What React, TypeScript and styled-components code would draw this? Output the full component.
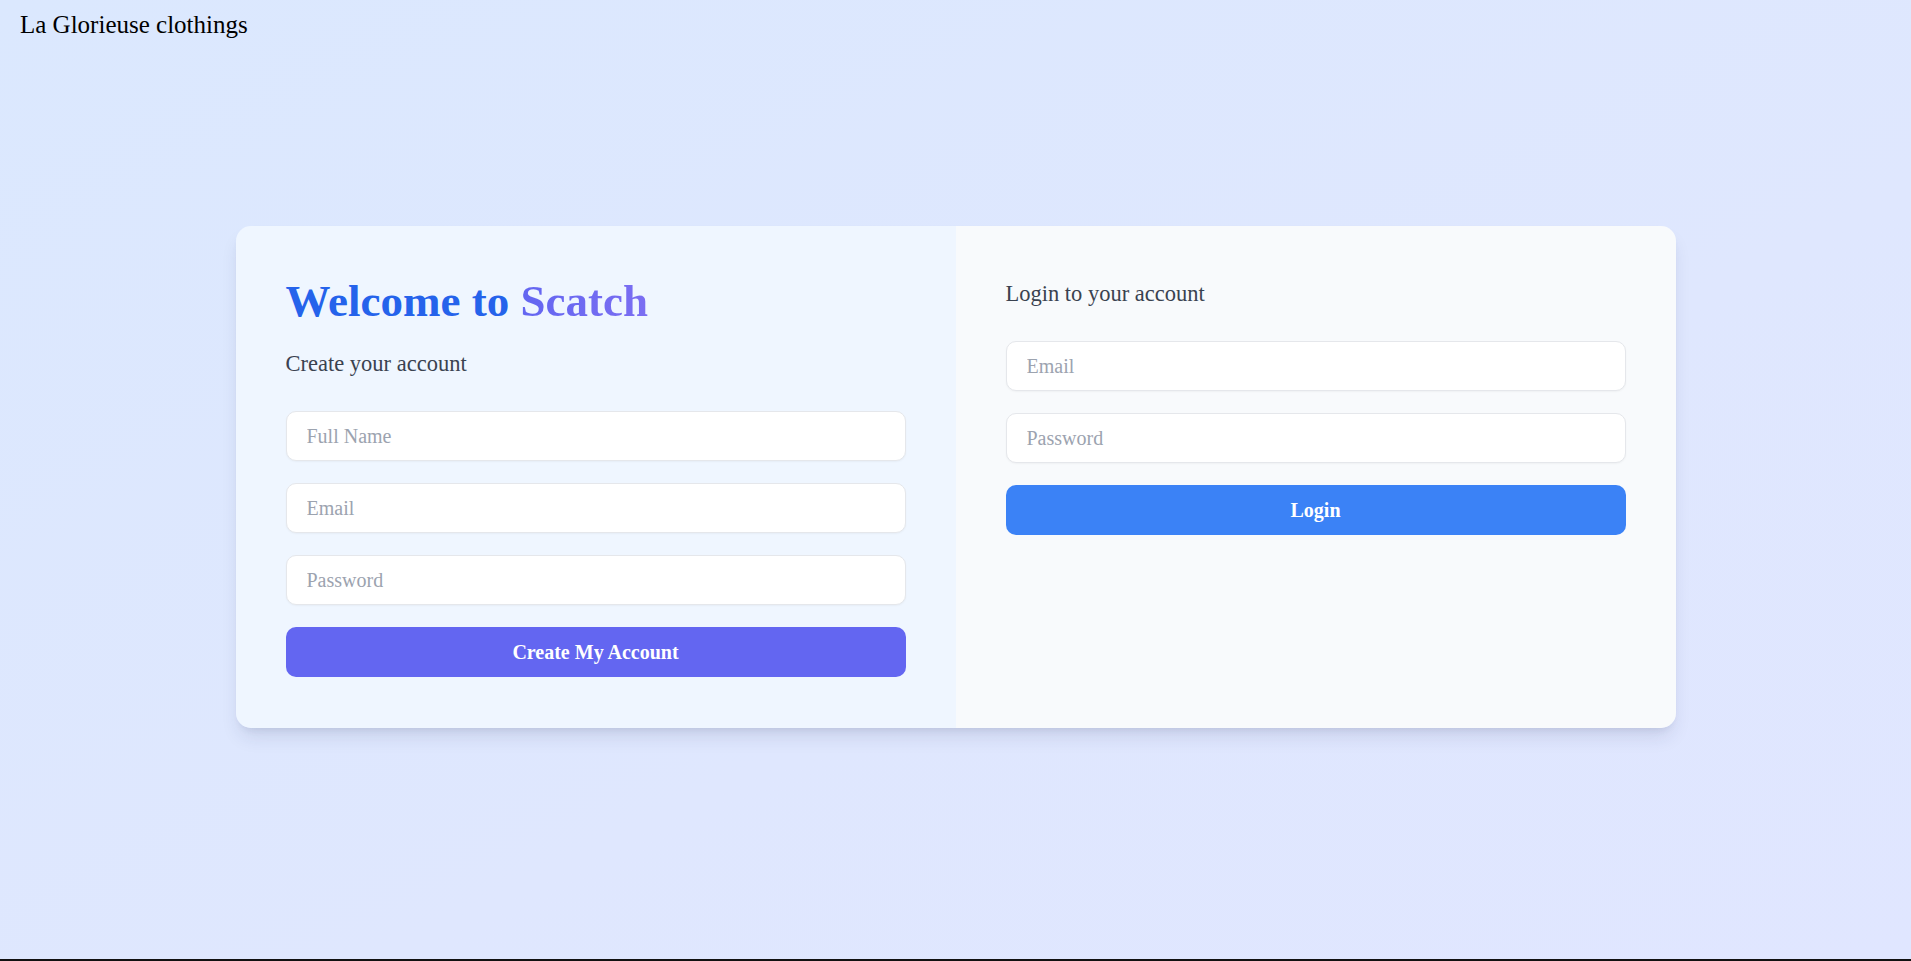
import React from "react";
import styled, { createGlobalStyle } from "styled-components";

const GlobalStyle = createGlobalStyle`
  html, body {
    margin: 0;
    padding: 0;
  }
  body {
    font-family: "Liberation Serif", "Times New Roman", serif;
  }
  * {
    box-sizing: border-box;
  }
`;

const Page = styled.div`
  height: 961px;
  display: flex;
  flex-direction: column;
  background: linear-gradient(to bottom right, #dbe8fe 0%, #dfe7fe 60%, #e0e6ff 100%);
  border-bottom: 2px solid #111;
  overflow: hidden;
`;

const Header = styled.header`
  padding: 10px 20px 0;
  font-size: 25px;
  line-height: 29px;
  color: #000;
`;

const Main = styled.main`
  padding-top: 187px;
`;

const Card = styled.div`
  width: 1440px;
  margin: 0 auto;
  display: grid;
  grid-template-columns: 1fr 1fr;
  border-radius: 15px;
  overflow: hidden;
  box-shadow: 0 12px 19px -4px rgba(30, 41, 80, 0.12),
    0 5px 8px -5px rgba(30, 41, 80, 0.12);
`;

const Column = styled.section<{ $bg: string }>`
  background: ${(p) => p.$bg};
  padding: 50px 50px 51px;
  display: flex;
  flex-direction: column;
`;

const Title = styled.h1`
  margin: 0 0 20px;
  font-size: 45px;
  line-height: 50px;
  font-weight: 700;
  color: #2563eb;
`;

const Brand = styled.span`
  background: linear-gradient(to right, #6366f1, #7b6ef2);
  -webkit-background-clip: text;
  background-clip: text;
  color: transparent;
`;

const Subtitle = styled.h3<{ $mb: number }>`
  margin: 0 0 ${(p) => p.$mb}px;
  font-size: 22.5px;
  line-height: 35px;
  font-weight: 400;
  color: #3a4250;
`;

const Form = styled.form`
  display: flex;
  flex-direction: column;
  gap: 22px;
`;

const Input = styled.input`
  width: 100%;
  height: 50px;
  padding: 0 20px;
  border: 1px solid #e5e7eb;
  border-radius: 10px;
  background: #fff;
  font-family: inherit;
  font-size: 20px;
  color: #111827;
  box-shadow: 0 1px 2px rgba(0, 0, 0, 0.04);
  outline: none;
  &::placeholder {
    color: #9ca3af;
  }
`;

const Button = styled.button<{ $color: string }>`
  width: 100%;
  height: 50px;
  border: none;
  border-radius: 10px;
  background: ${(p) => p.$color};
  color: #fff;
  font-family: inherit;
  font-size: 20px;
  font-weight: 700;
  cursor: pointer;
`;

export default function App() {
  return (
    <>
      <GlobalStyle />
      <Page>
        <Header>La Glorieuse clothings</Header>
        <Main>
          <Card>
            <Column $bg="#eff6ff">
              <Title>
                Welcome to <Brand>Scatch</Brand>
              </Title>
              <Subtitle $mb={30}>Create your account</Subtitle>
              <Form onSubmit={(e) => e.preventDefault()}>
                <Input type="text" placeholder="Full Name" />
                <Input type="email" placeholder="Email" />
                <Input type="password" placeholder="Password" />
                <Button type="submit" $color="#6366f1">
                  Create My Account
                </Button>
              </Form>
            </Column>
            <Column $bg="#f8fafc">
              <Subtitle $mb={30}>Login to your account</Subtitle>
              <Form onSubmit={(e) => e.preventDefault()}>
                <Input type="email" placeholder="Email" />
                <Input type="password" placeholder="Password" />
                <Button type="submit" $color="#3b82f6">
                  Login
                </Button>
              </Form>
            </Column>
          </Card>
        </Main>
      </Page>
    </>
  );
}
